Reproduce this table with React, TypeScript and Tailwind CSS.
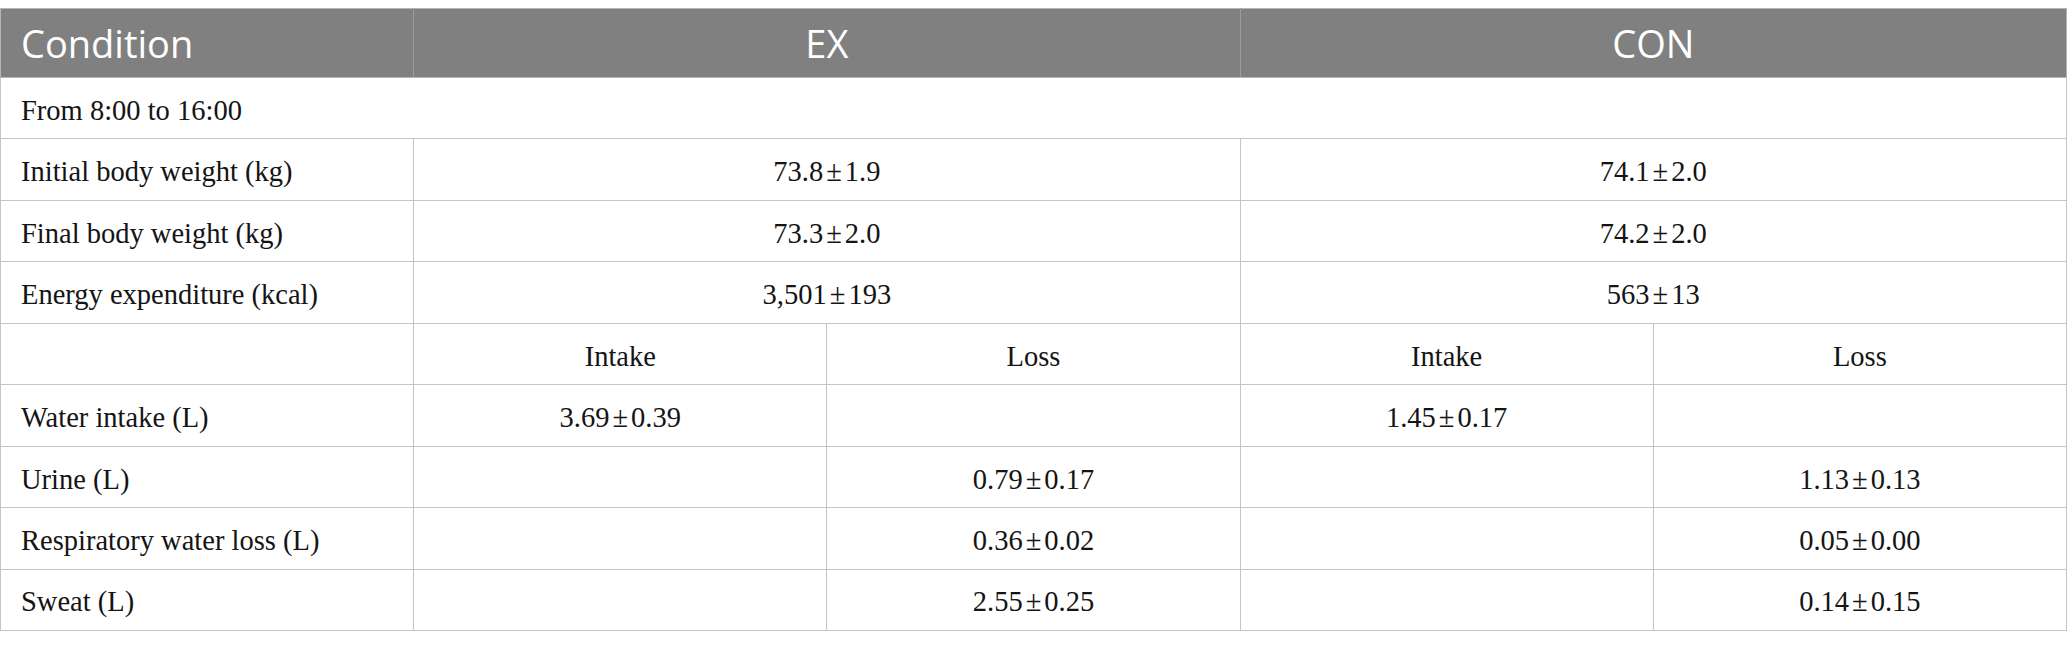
const PM = ({ a, b }: { a: string; b: string }) => (
  <>
    {a}
    <span className="mx-[3px]">±</span>
    {b}
  </>
);

const bodyRows: { label: string; ex: [string, string]; con: [string, string] }[] = [
  { label: 'Initial body weight (kg)', ex: ['73.8', '1.9'], con: ['74.1', '2.0'] },
  { label: 'Final body weight (kg)', ex: ['73.3', '2.0'], con: ['74.2', '2.0'] },
  { label: 'Energy expenditure (kcal)', ex: ['3,501', '193'], con: ['563', '13'] },
];

type Val = [string, string] | null;
const splitRows: { label: string; cells: Val[] }[] = [
  { label: 'Water intake (L)', cells: [['3.69', '0.39'], null, ['1.45', '0.17'], null] },
  { label: 'Urine (L)', cells: [null, ['0.79', '0.17'], null, ['1.13', '0.13']] },
  { label: 'Respiratory water loss (L)', cells: [null, ['0.36', '0.02'], null, ['0.05', '0.00']] },
  { label: 'Sweat (L)', cells: [null, ['2.55', '0.25'], null, ['0.14', '0.15']] },
];

const td = 'border border-[#c4c4c4] h-[61.44px] pt-[6px] pb-0 align-middle';
const th = 'h-[69px] py-0 align-middle font-normal text-white text-[38px]';

export default function App() {
  return (
    <div className="w-[2067px] h-[648px] bg-white pt-[8px]">
      <table
        className="w-full table-fixed border-collapse text-[#141414] text-[28.5px] leading-none"
        style={{ fontFamily: '"Liberation Serif", "Times New Roman", serif' }}
      >
        <colgroup>
          <col className="w-1/5" />
          <col className="w-1/5" />
          <col className="w-1/5" />
          <col className="w-1/5" />
          <col className="w-1/5" />
        </colgroup>
        <thead>
          <tr className="bg-[#7f807f]" style={{ fontFamily: '"Open Sans", sans-serif' }}>
            <th className={`${th} text-left pl-5 border border-[#b5b5b5] border-r-[#9c9c9c]`}>Condition</th>
            <th colSpan={2} className={`${th} text-center border border-[#b5b5b5] border-x-[#9c9c9c]`}>EX</th>
            <th colSpan={2} className={`${th} text-center border border-[#b5b5b5] border-l-[#9c9c9c]`}>CON</th>
          </tr>
        </thead>
        <tbody>
          <tr>
            <td colSpan={5} className={`${td} text-left pl-5`}>From 8:00 to 16:00</td>
          </tr>
          {bodyRows.map((r) => (
            <tr key={r.label}>
              <td className={`${td} text-left pl-5`}>{r.label}</td>
              <td colSpan={2} className={`${td} text-center`}>
                <PM a={r.ex[0]} b={r.ex[1]} />
              </td>
              <td colSpan={2} className={`${td} text-center`}>
                <PM a={r.con[0]} b={r.con[1]} />
              </td>
            </tr>
          ))}
          <tr>
            <td className={td}></td>
            <td className={`${td} text-center`}>Intake</td>
            <td className={`${td} text-center`}>Loss</td>
            <td className={`${td} text-center`}>Intake</td>
            <td className={`${td} text-center`}>Loss</td>
          </tr>
          {splitRows.map((r) => (
            <tr key={r.label}>
              <td className={`${td} text-left pl-5`}>{r.label}</td>
              {r.cells.map((c, i) => (
                <td key={i} className={`${td} text-center`}>
                  {c && <PM a={c[0]} b={c[1]} />}
                </td>
              ))}
            </tr>
          ))}
        </tbody>
      </table>
    </div>
  );
}
